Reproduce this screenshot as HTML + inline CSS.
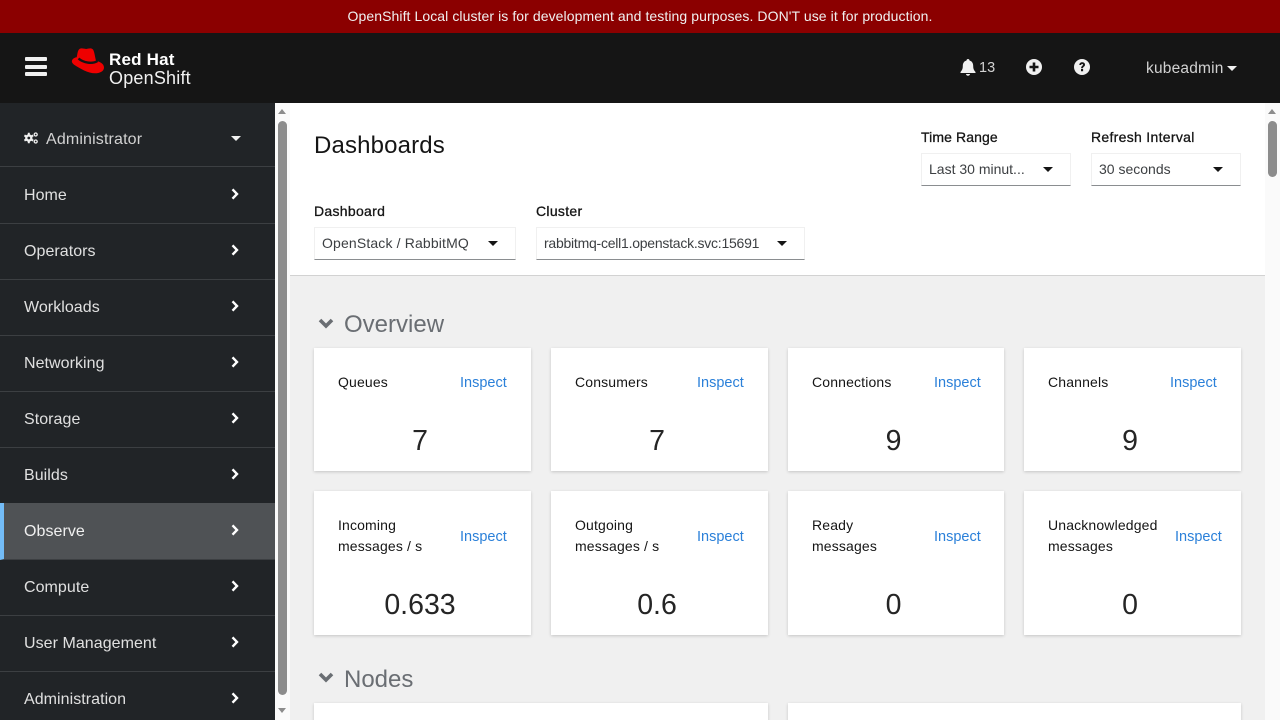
<!DOCTYPE html>
<html><head><meta charset="utf-8"><style>
html,body{margin:0;padding:0;width:1280px;height:720px;overflow:hidden;background:#f0f0f0;font-family:"Liberation Sans",sans-serif}
#root{position:relative;width:1280px;height:720px;overflow:hidden;background:#f0f0f0}
.a{position:absolute;white-space:nowrap}
.nav{position:absolute;left:0;width:275px;height:56px;background:#212427;box-sizing:border-box;border-bottom:1px solid #3c3f42;color:#e0e0e0;font-size:16px;letter-spacing:.05px;line-height:55px;padding-left:24px}
.nav svg{position:absolute;left:231px;top:20px}
.card{position:absolute;background:#fff;box-shadow:0 1px 3px rgba(3,3,3,.18)}
.lbl{position:absolute;left:24px;font-size:14px;letter-spacing:.15px;line-height:21px;color:#151515;white-space:nowrap}
.ins{position:absolute;font-size:14.5px;color:#2b80d9;line-height:20px}
.val{position:absolute;left:0;right:5px;text-align:center;font-size:28.5px;line-height:34px;color:#252525}
.t{position:absolute;font-size:14px;letter-spacing:.3px;color:#151515;white-space:nowrap;-webkit-text-stroke:.3px #151515}
.sel{position:absolute;height:33px;box-sizing:border-box;background:#fff;border:1px solid #f0f0f0;border-bottom:1px solid #8a8d90;font-size:14px;line-height:31px;padding-left:7px;color:#3c3f42;white-space:nowrap}
.car{position:absolute;width:0;height:0;border-left:5px solid transparent;border-right:5px solid transparent;border-top:5px solid #151515}
.sec{position:absolute;left:344px;font-size:24px;line-height:28px;color:#6a6e73}
</style></head><body><div id="root">

<div class="a" style="left:0;top:0;width:1280px;height:33px;background:#8b0000;color:#f0f0f0;font-size:14px;letter-spacing:.08px;line-height:33px;text-align:center">OpenShift Local cluster is for development and testing purposes. DON'T use it for production.</div>
<div class="a" style="left:0;top:33px;width:1280px;height:70px;background:#151515"></div>

<svg class="a" style="left:25px;top:57px" width="22" height="20"><rect y="0" width="22" height="4" rx="1" fill="#f0f0f0"/><rect y="8" width="22" height="4" rx="1" fill="#f0f0f0"/><rect y="15" width="22" height="4" rx="1" fill="#f0f0f0"/></svg>

<svg class="a" style="left:71px;top:47px" width="34" height="27" viewBox="0 0 34 27">
<path d="M5.700 10.300C6.500 7 6.500 3.500 8.500 2C10.500 .8 13 1.800 15 2C17 1.800 20 .3 22 2.500C23.500 5 24 10 25 13.700C28.500 14.500 33 16.500 33 20.500C33 24.500 28.500 26.300 24 26.300C17 26.300 9 21.500 3.500 18C1.500 16.500 .5 15 1 13.500C1.800 11.500 4 10.500 5.700 10.300Z" fill="#e00"/>
<path d="M7.500 11.500C12 15.500 21 17.500 26.500 14" fill="none" stroke="#151515" stroke-width="2.400"/></svg>
<div class="a" style="left:109px;top:50px;font-size:17px;font-weight:700;line-height:20px;color:#fff;letter-spacing:.2px">Red Hat</div>
<div class="a" style="left:109px;top:68px;font-size:18px;letter-spacing:.2px;line-height:20px;color:#f0f0f0">OpenShift</div>

<svg class="a" style="left:960px;top:59px" width="16" height="17" viewBox="0 0 16 17"><path d="M8 0C7 0 6.500 .7 6.500 1.500C4 2.200 2.800 4.200 2.800 7C2.800 10 2 11.300 .5 13V14H15.500V13C14 11.300 13.200 10 13.200 7C13.200 4.200 12 2.200 9.500 1.500C9.500 .7 9 0 8 0ZM6 15C6 16 7 16.800 8 16.800S10 16 10 15Z" fill="#f0f0f0"/></svg>
<div class="a" style="left:979px;top:58px;font-size:14.500px;line-height:20px;color:#d2d2d2">13</div>
<svg class="a" style="left:1026px;top:59px" width="16" height="16" viewBox="0 0 16 16"><circle cx="8" cy="8" r="8" fill="#f0f0f0"/><path d="M3.500 6.700H6.700V3.500H9.300V6.700H12.500V9.300H9.300V12.500H6.700V9.300H3.500Z" fill="#151515"/></svg>
<svg class="a" style="left:1074px;top:59px" width="16" height="16" viewBox="0 0 16 16"><circle cx="8" cy="8" r="8" fill="#f0f0f0"/><path d="M5.300 6C5.400 4.300 6.500 3.300 8.200 3.300C9.800 3.300 11 4.300 11 5.700C11 7.500 9 7.600 9 9.200H7.100C7.100 7 9 6.800 9 5.800C9 5.300 8.700 5 8.100 5C7.500 5 7.200 5.400 7.100 6ZM7 10H9.100V12.300H7Z" fill="#151515"/></svg>
<div class="a" style="left:1146px;top:59px;font-size:15.500px;letter-spacing:.2px;line-height:20px;color:#d2d2d2">kubeadmin</div>
<div class="car" style="left:1227px;top:66px;border-top-color:#f0f0f0"></div>

<div class="a" style="left:0;top:103px;width:275px;height:64px;background:#212427;box-sizing:border-box;border-bottom:1px solid #3c3f42"></div>
<svg class="a" style="left:24px;top:132px" width="14" height="12" viewBox="0 0 14 12"><path d="M4.800 .8V11.200M.4 3.400L9.200 8.600M.4 8.600L9.200 3.400" stroke="#f0f0f0" stroke-width="2"/><circle cx="4.800" cy="6" r="3.700" fill="#f0f0f0"/><circle cx="4.800" cy="6" r="1.400" fill="#212427"/><circle cx="11.700" cy="2.500" r="1.500" fill="none" stroke="#f0f0f0" stroke-width="1.300"/><circle cx="11.700" cy="9.500" r="1.500" fill="none" stroke="#f0f0f0" stroke-width="1.300"/></svg>
<div class="a" style="left:46px;top:130px;font-size:16px;letter-spacing:.15px;line-height:20px;color:#d2d2d2">Administrator</div>
<div class="car" style="left:231px;top:136px;border-top-color:#f0f0f0"></div>

<div class="nav" style="top:167px;height:57px;padding-top:1px">Home<svg style="top:21px" width="8" height="12" viewBox="0 0 8 12"><path d="M1.500 1.300L6 6L1.500 10.700" fill="none" stroke="#fff" stroke-width="2.400"/></svg></div>
<div class="nav" style="top:224px">Operators<svg width="8" height="12" viewBox="0 0 8 12"><path d="M1.500 1.300L6 6L1.500 10.700" fill="none" stroke="#fff" stroke-width="2.400"/></svg></div>
<div class="nav" style="top:280px">Workloads<svg width="8" height="12" viewBox="0 0 8 12"><path d="M1.500 1.300L6 6L1.500 10.700" fill="none" stroke="#fff" stroke-width="2.400"/></svg></div>
<div class="nav" style="top:336px">Networking<svg width="8" height="12" viewBox="0 0 8 12"><path d="M1.500 1.300L6 6L1.500 10.700" fill="none" stroke="#fff" stroke-width="2.400"/></svg></div>
<div class="nav" style="top:392px">Storage<svg width="8" height="12" viewBox="0 0 8 12"><path d="M1.500 1.300L6 6L1.500 10.700" fill="none" stroke="#fff" stroke-width="2.400"/></svg></div>
<div class="nav" style="top:448px">Builds<svg width="8" height="12" viewBox="0 0 8 12"><path d="M1.500 1.300L6 6L1.500 10.700" fill="none" stroke="#fff" stroke-width="2.400"/></svg></div>
<div class="nav" style="top:503px;height:57px;padding-top:1px;background:#4f5255;border-left:4px solid #73bcf7;padding-left:20px;color:#f0f0f0">Observe<svg style="left:227px;top:21px" width="8" height="12" viewBox="0 0 8 12"><path d="M1.500 1.300L6 6L1.500 10.700" fill="none" stroke="#fff" stroke-width="2.400"/></svg></div>
<div class="nav" style="top:560px">Compute<svg width="8" height="12" viewBox="0 0 8 12"><path d="M1.500 1.300L6 6L1.500 10.700" fill="none" stroke="#fff" stroke-width="2.400"/></svg></div>
<div class="nav" style="top:616px">User Management<svg width="8" height="12" viewBox="0 0 8 12"><path d="M1.500 1.300L6 6L1.500 10.700" fill="none" stroke="#fff" stroke-width="2.400"/></svg></div>
<div class="nav" style="top:672px">Administration<svg width="8" height="12" viewBox="0 0 8 12"><path d="M1.500 1.300L6 6L1.500 10.700" fill="none" stroke="#fff" stroke-width="2.400"/></svg></div>

<div class="a" style="left:275px;top:103px;width:15px;height:617px;background:#fafafa"></div>
<div class="a" style="left:278px;top:121px;width:9px;height:574px;border-radius:5px;background:#8c8c8c"></div>
<div class="car" style="left:278px;top:109px;border-top:0;border-bottom:5px solid #8c8c8c;border-left-width:4.500px;border-right-width:4.500px"></div>
<div class="car" style="left:278px;top:708px;border-top-color:#8c8c8c;border-left-width:4.500px;border-right-width:4.500px"></div>

<div class="a" style="left:290px;top:103px;width:975px;height:173px;background:#fff;box-sizing:border-box;border-bottom:1px solid #d2d2d2"></div>
<div class="a" style="left:1265px;top:103px;width:15px;height:617px;background:#fafafa"></div>
<div class="a" style="left:1268px;top:121px;width:9px;height:56px;border-radius:5px;background:#8c8c8c"></div>
<div class="car" style="left:1268px;top:109px;border-top:0;border-bottom:5px solid #8c8c8c;border-left-width:4.500px;border-right-width:4.500px"></div>

<div class="a" style="left:314px;top:131px;font-size:24px;letter-spacing:.15px;line-height:30px;color:#151515">Dashboards</div>
<div class="t" style="left:921px;top:129px;letter-spacing:.1px">Time Range</div>
<div class="t" style="left:1091px;top:129px">Refresh Interval</div>
<div class="sel" style="left:921px;top:153px;width:150px">Last 30 minut...</div><div class="car" style="left:1043px;top:167px"></div>
<div class="sel" style="left:1091px;top:153px;width:150px">30 seconds</div><div class="car" style="left:1213px;top:167px"></div>
<div class="t" style="left:314px;top:203px">Dashboard</div>
<div class="t" style="left:536px;top:203px">Cluster</div>
<div class="sel" style="left:314px;top:227px;width:202px;letter-spacing:.15px">OpenStack / RabbitMQ</div><div class="car" style="left:488px;top:241px"></div>
<div class="sel" style="left:536px;top:227px;width:269px;letter-spacing:-.24px">rabbitmq-cell1.openstack.svc:15691</div><div class="car" style="left:777px;top:241px"></div>

<svg class="a" style="left:318px;top:318px" width="16" height="11" viewBox="0 0 16 11"><path d="M2 2L8 8L14 2" fill="none" stroke="#6a6e73" stroke-width="3.600"/></svg>
<div class="sec" style="top:311px">Overview</div>

<div class="card" style="left:314px;top:348px;width:217px;height:123px"><div class="lbl" style="top:24px">Queues</div><div class="ins" style="left:146px;top:25px">Inspect</div><div class="val" style="top:76px">7</div></div>
<div class="card" style="left:551px;top:348px;width:217px;height:123px"><div class="lbl" style="top:24px">Consumers</div><div class="ins" style="left:146px;top:25px">Inspect</div><div class="val" style="top:76px">7</div></div>
<div class="card" style="left:788px;top:348px;width:216px;height:123px"><div class="lbl" style="top:24px">Connections</div><div class="ins" style="left:146px;top:25px">Inspect</div><div class="val" style="top:76px">9</div></div>
<div class="card" style="left:1024px;top:348px;width:217px;height:123px"><div class="lbl" style="top:24px">Channels</div><div class="ins" style="left:146px;top:25px">Inspect</div><div class="val" style="top:76px">9</div></div>

<div class="card" style="left:314px;top:491px;width:217px;height:144px"><div class="lbl" style="top:24px">Incoming<br>messages / s</div><div class="ins" style="left:146px;top:36px">Inspect</div><div class="val" style="top:97px">0.633</div></div>
<div class="card" style="left:551px;top:491px;width:217px;height:144px"><div class="lbl" style="top:24px">Outgoing<br>messages / s</div><div class="ins" style="left:146px;top:36px">Inspect</div><div class="val" style="top:97px">0.6</div></div>
<div class="card" style="left:788px;top:491px;width:216px;height:144px"><div class="lbl" style="top:24px">Ready<br>messages</div><div class="ins" style="left:146px;top:36px">Inspect</div><div class="val" style="top:97px">0</div></div>
<div class="card" style="left:1024px;top:491px;width:217px;height:144px"><div class="lbl" style="top:24px">Unacknowledged<br>messages</div><div class="ins" style="left:151px;top:36px">Inspect</div><div class="val" style="top:97px">0</div></div>

<svg class="a" style="left:318px;top:672px" width="16" height="11" viewBox="0 0 16 11"><path d="M2 2L8 8L14 2" fill="none" stroke="#6a6e73" stroke-width="3.600"/></svg>
<div class="sec" style="top:666px">Nodes</div>
<div class="card" style="left:314px;top:703px;width:454px;height:40px"></div>
<div class="card" style="left:788px;top:703px;width:453px;height:40px"></div>

</div></body></html>
